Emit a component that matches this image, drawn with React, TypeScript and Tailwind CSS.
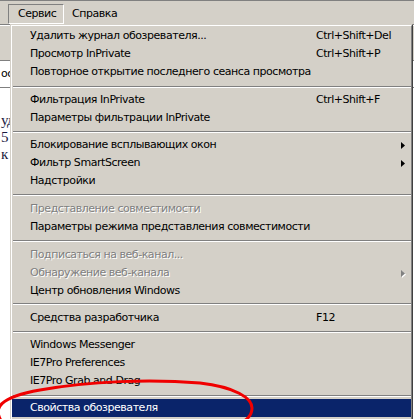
import {ReactNode} from 'react';

type Row =
    | {kind: 'item'; label: string; shortcut?: string; sub?: boolean; disabled?: boolean; selected?: boolean}
    | {kind: 'sep'; h: string; pt: string};

const rows: Row[] = [
    {kind: 'item', label: 'Удалить журнал обозревателя...', shortcut: 'Ctrl+Shift+Del'},
    {kind: 'item', label: 'Просмотр InPrivate', shortcut: 'Ctrl+Shift+P'},
    {kind: 'item', label: 'Повторное открытие последнего сеанса просмотра'},
    {kind: 'sep', h: 'h-[10px]', pt: 'pt-[5px]'},
    {kind: 'item', label: 'Фильтрация InPrivate', shortcut: 'Ctrl+Shift+F'},
    {kind: 'item', label: 'Параметры фильтрации InPrivate'},
    {kind: 'sep', h: 'h-[9px]', pt: 'pt-[4px]'},
    {kind: 'item', label: 'Блокирование всплывающих окон', sub: true},
    {kind: 'item', label: 'Фильтр SmartScreen', sub: true},
    {kind: 'item', label: 'Надстройки'},
    {kind: 'sep', h: 'h-[10px]', pt: 'pt-[4px]'},
    {kind: 'item', label: 'Представление совместимости', disabled: true},
    {kind: 'item', label: 'Параметры режима представления совместимости'},
    {kind: 'sep', h: 'h-[10px]', pt: 'pt-[4px]'},
    {kind: 'item', label: 'Подписаться на веб-канал...', disabled: true},
    {kind: 'item', label: 'Обнаружение веб-канала', disabled: true, sub: true},
    {kind: 'item', label: 'Центр обновления Windows'},
    {kind: 'sep', h: 'h-[9px]', pt: 'pt-[3px]'},
    {kind: 'item', label: 'Средства разработчика', shortcut: 'F12'},
    {kind: 'sep', h: 'h-[9px]', pt: 'pt-[4px]'},
    {kind: 'item', label: 'Windows Messenger'},
    {kind: 'item', label: 'IE7Pro Preferences'},
    {kind: 'item', label: 'IE7Pro Grab and Drag'},
    {kind: 'sep', h: 'h-[9px]', pt: 'pt-[5px]'},
    {kind: 'item', label: 'Свойства обозревателя', selected: true},
];

const disabledText = 'text-[#808080] [text-shadow:1px_1px_0_#ffffff]';

function Arrow({disabled}: {disabled?: boolean}) {
    return (
        <svg width="4" height="7" viewBox="0 0 4 7" className={disabled ? 'drop-shadow-[1px_1px_0_#ffffff]' : ''}>
            <path d="M0 0 L4 3.5 L0 7 Z" fill={disabled ? '#808080' : '#000000'}/>
        </svg>
    );
}

function MenuItem({row}: {row: Extract<Row, {kind: 'item'}>}) {
    const color = row.selected ? 'bg-[#0a246a] text-white' : row.disabled ? disabledText : 'text-black';
    return (
        <div className={`flex h-[18px] items-center pl-[18px] pr-[6px] whitespace-nowrap ${color}`}>
            <span className="w-[286px] shrink-0">{row.label}</span>
            <span className="flex-1">{row.shortcut}</span>
            {row.sub && <Arrow disabled={row.disabled}/>}
        </div>
    );
}

function Separator({h, pt}: {h: string; pt: string}) {
    return (
        <div className={`${h} ${pt} pl-[1px]`}>
            <div className="h-px bg-[#808080]"/>
            <div className="h-px bg-white"/>
        </div>
    );
}

function Page({children}: {children?: ReactNode}) {
    return (
        <div className="flex flex-col">
            <div className="h-[24px] border-t border-t-[#808080] flex items-start">
                <div className="mt-[3px] ml-[8px] h-[20px] w-[56px] border border-t-[#808080] border-l-[#808080] border-b-white border-r-white pl-[9px] leading-[18px]">
                    Сервис
                </div>
                <div className="mt-[4px] ml-[8px] leading-[18px]">Справка</div>
            </div>
            <div className="h-[2px] border-t border-t-[#808080] border-b border-b-white"/>
            <div className="h-[34px]"/>
            <div className="h-[28px] bg-white border-t border-t-[#808080] border-b border-b-[#808080] pt-[5px] pl-[1px]">
                ос
            </div>
            <div className="h-[331px] bg-white pt-[24px] pl-[1px] font-['Liberation_Serif',serif] text-[15px] leading-[17px] text-[#1a1a40]">
                <div>уд</div>
                <div>5</div>
                <div>к</div>
            </div>
            {children}
        </div>
    );
}

export default function App() {
    return (
        <div className="relative w-[414px] h-[419px] overflow-hidden bg-[#d4d0c8] text-[11px] tracking-[-0.45px] text-black font-['DejaVu_Sans',sans-serif]">
            <Page/>
            <div className="absolute left-[10px] top-[24px] w-[403px] h-[420px] bg-[#d4d0c8] border-t border-l border-t-[#d4d0c8] border-l-[#d4d0c8] border-r border-b border-r-[#404040] border-b-[#404040]">
                <div className="h-full border-t border-l border-t-white border-l-white border-r border-r-[#808080] pt-[1px]">
                    {rows.map((row, i) =>
                        row.kind === 'sep'
                            ? <Separator key={i} h={row.h} pt={row.pt}/>
                            : <MenuItem key={i} row={row}/>
                    )}
                </div>
            </div>
            <svg className="absolute left-0 top-0 pointer-events-none" width="414" height="419">
                <path
                    d="M2 422 C-8 408 0 397 40 390 C90 381 150 379 200 383 C235 387 252 398 252 408 C252 416 246 420 240 424"
                    fill="none" stroke="#f00000" strokeWidth="3" strokeLinecap="round"/>
            </svg>
        </div>
    );
}
